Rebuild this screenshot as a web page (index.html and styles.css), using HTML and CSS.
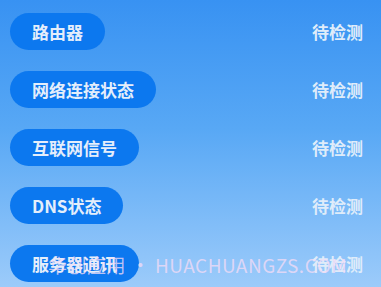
FILE: index.html
```html
<!DOCTYPE html>
<html lang="zh">
<head>
<meta charset="utf-8">
<link rel="stylesheet" href="styles.css">
</head>
<body>
<div class="screen">
  <div class="list">
    <div class="row"><span class="pill">路由器</span><span class="status">待检测</span></div>
    <div class="row"><span class="pill">网络连接状态</span><span class="status">待检测</span></div>
    <div class="row"><span class="pill">互联网信号</span><span class="status">待检测</span></div>
    <div class="row"><span class="pill">DNS状态</span><span class="status">待检测</span></div>
    <div class="row"><span class="pill">服务器通讯</span><span class="status">待检测</span></div>
  </div>
  <div class="watermark">华创应用 · HUACHUANGZS.COM</div>
</div>
</body>
</html>
```
FILE: styles.css
```css
html, body {
  margin: 0;
  padding: 0;
}
body {
  width: 381px;
  height: 287px;
  overflow: hidden;
  font-family: "Noto Sans CJK SC", "Noto Sans", sans-serif;
}
.screen {
  position: relative;
  width: 381px;
  height: 287px;
  background: linear-gradient(180deg, #3892f2 0%, #58a8f5 45%, #9ccbfa 100%);
  box-sizing: border-box;
  padding: 13px 18px 0 10px;
}
.list {
  display: flex;
  flex-direction: column;
  gap: 21px;
}
.row {
  display: flex;
  align-items: center;
  justify-content: space-between;
  height: 37px;
}
.pill {
  height: 37px;
  display: flex;
  align-items: center;
  padding: 0 22px 0 22px;
  border-radius: 18.5px;
  background: #0c78ef;
  color: #e4eefb;
  font-size: 17px;
  font-weight: 700;
  line-height: 1;
}
.status {
  color: #dfecfa;
  font-size: 17px;
  font-weight: 700;
  line-height: 1;
}
.watermark {
  position: absolute;
  z-index: 2;
  left: 48px;
  top: 251px;
  font-family: "Noto Sans CJK SC", "Noto Sans", sans-serif;
  font-size: 19px;
  color: rgba(245, 220, 245, 0.75);
  white-space: nowrap;
  letter-spacing: 0.5px;
}
```
